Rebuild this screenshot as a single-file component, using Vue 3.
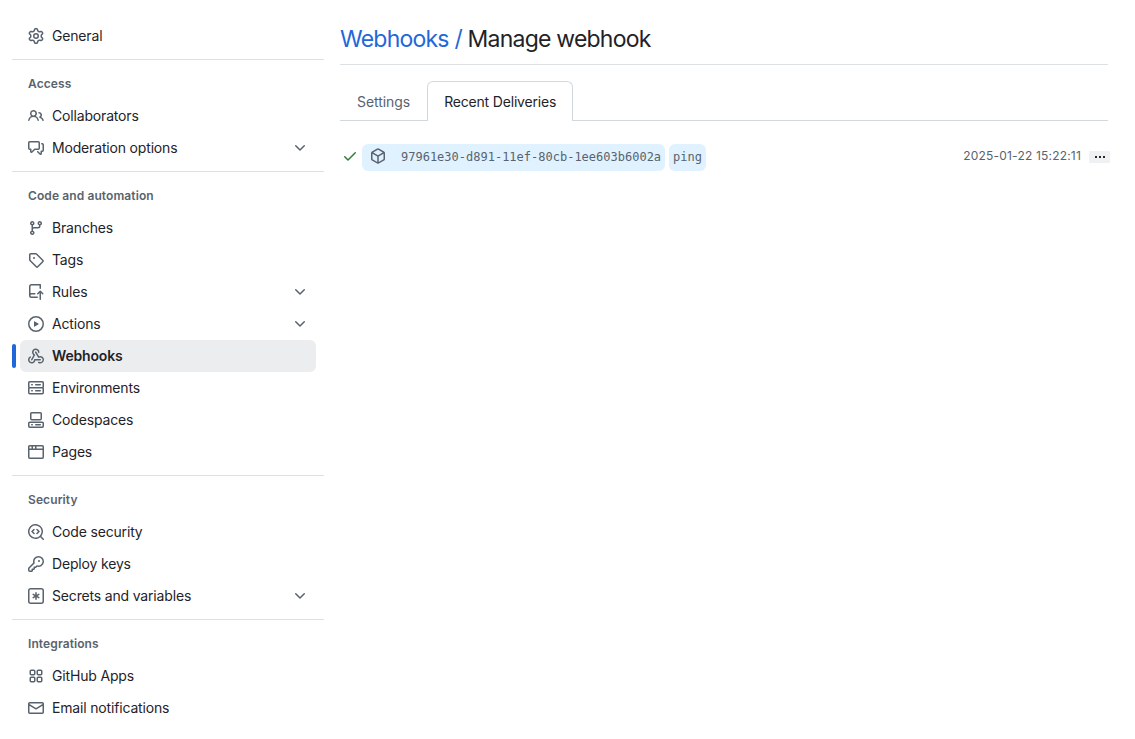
<script setup>
const icons = {
  gear: 'M8 0a8.2 8.2 0 0 1 .701.031C9.444.095 9.99.645 10.16 1.29l.288 1.107c.018.066.079.158.212.224.231.114.454.243.668.386.123.082.233.09.299.071l1.103-.303c.644-.176 1.392.021 1.82.63.27.385.506.792.704 1.218.315.675.111 1.422-.364 1.891l-.814.806c-.049.048-.098.147-.088.294.016.257.016.515 0 .772-.01.147.038.246.088.294l.814.806c.475.469.679 1.216.364 1.891a7.977 7.977 0 0 1-.704 1.217c-.428.61-1.176.807-1.82.63l-1.102-.302c-.067-.019-.177-.011-.3.071a5.909 5.909 0 0 1-.668.386c-.133.066-.194.158-.211.224l-.29 1.106c-.168.646-.715 1.196-1.458 1.26a8.006 8.006 0 0 1-1.402 0c-.743-.064-1.289-.614-1.458-1.26l-.289-1.106c-.018-.066-.079-.158-.212-.224a5.738 5.738 0 0 1-.668-.386c-.123-.082-.233-.09-.299-.071l-1.103.303c-.644.176-1.392-.021-1.82-.63a8.12 8.12 0 0 1-.704-1.218c-.315-.675-.111-1.422.363-1.891l.815-.806c.05-.048.098-.147.088-.294a6.214 6.214 0 0 1 0-.772c.01-.147-.038-.246-.088-.294l-.815-.806C.635 6.045.431 5.298.746 4.623a7.92 7.92 0 0 1 .704-1.217c.428-.61 1.176-.807 1.82-.63l1.102.302c.067.019.177.011.3-.071.214-.143.437-.272.668-.386.133-.066.194-.158.211-.224l.29-1.106C6.009.645 6.556.095 7.299.03 7.53.01 7.764 0 8 0Zm-.571 1.525c-.036.003-.108.036-.137.146l-.289 1.105c-.147.561-.549.967-.998 1.189-.173.086-.34.183-.5.29-.417.278-.97.423-1.529.27l-1.103-.303c-.109-.03-.175.016-.195.045-.22.312-.412.644-.573.99-.014.031-.021.11.059.19l.815.806c.411.406.562.957.53 1.456a4.709 4.709 0 0 0 0 .582c.032.499-.119 1.05-.53 1.456l-.815.806c-.081.08-.073.159-.059.19.162.346.353.677.573.989.02.03.085.076.195.046l1.102-.303c.56-.153 1.113-.008 1.53.27.161.107.328.204.501.29.447.222.85.629.997 1.189l.289 1.105c.029.109.101.143.137.146a6.6 6.6 0 0 0 1.142 0c.036-.003.108-.036.137-.146l.289-1.105c.147-.561.549-.967.998-1.189.173-.086.34-.183.5-.29.417-.278.97-.423 1.529-.27l1.103.303c.109.029.175-.016.195-.045.22-.313.411-.644.573-.99.014-.031.021-.11-.059-.19l-.815-.806c-.411-.406-.562-.957-.53-1.456a4.709 4.709 0 0 0 0-.582c-.032-.499.119-1.05.53-1.456l.815-.806c.081-.08.073-.159.059-.19a6.464 6.464 0 0 0-.573-.989c-.02-.03-.085-.076-.195-.046l-1.102.303c-.56.153-1.113.008-1.53-.27a4.44 4.44 0 0 0-.501-.29c-.447-.222-.85-.629-.997-1.189l-.289-1.105c-.029-.11-.101-.143-.137-.146a6.6 6.6 0 0 0-1.142 0ZM11 8a3 3 0 1 1-6 0 3 3 0 0 1 6 0ZM9.5 8a1.5 1.5 0 1 0-3.001.001A1.5 1.5 0 0 0 9.5 8Z',
  people: 'M2 5.5a3.5 3.5 0 1 1 5.898 2.549 5.508 5.508 0 0 1 3.034 4.084.75.75 0 1 1-1.482.235 4 4 0 0 0-7.9 0 .75.75 0 0 1-1.482-.236A5.507 5.507 0 0 1 3.102 8.05 3.493 3.493 0 0 1 2 5.5ZM11 4a3.001 3.001 0 0 1 2.22 5.018 5.01 5.01 0 0 1 2.56 3.012.749.749 0 0 1-.885.954.752.752 0 0 1-.549-.514 3.507 3.507 0 0 0-2.522-2.372.75.75 0 0 1-.574-.73v-.352a.75.75 0 0 1 .416-.672A1.5 1.5 0 0 0 11 5.5.75.75 0 0 1 11 4Zm-5.5-.5a2 2 0 1 0-.001 3.999A2 2 0 0 0 5.5 3.5Z',
  discussion: 'M1.75 1h8.5c.966 0 1.75.784 1.75 1.75v5.5A1.75 1.75 0 0 1 10.25 10H7.061l-2.574 2.573A1.458 1.458 0 0 1 2 11.543V10h-.25A1.75 1.75 0 0 1 0 8.25v-5.5C0 1.784.784 1 1.75 1ZM1.5 2.75v5.5c0 .138.112.25.25.25h1a.75.75 0 0 1 .75.75v2.19l2.72-2.72a.749.749 0 0 1 .53-.22h3.5a.25.25 0 0 0 .25-.25v-5.5a.25.25 0 0 0-.25-.25h-8.5a.25.25 0 0 0-.25.25Zm13 2a.25.25 0 0 0-.25-.25h-.5a.75.75 0 0 1 0-1.5h.5c.966 0 1.75.784 1.75 1.75v5.5A1.75 1.75 0 0 1 14.25 12H14v1.543a1.458 1.458 0 0 1-2.487 1.03L9.22 12.28a.749.749 0 0 1 .326-1.275.749.749 0 0 1 .734.215l2.22 2.22v-2.19a.75.75 0 0 1 .75-.75h1a.25.25 0 0 0 .25-.25Z',
  branch: 'M9.5 3.25a2.25 2.25 0 1 1 3 2.122V6A2.5 2.5 0 0 1 10 8.5H6a1 1 0 0 0-1 1v1.128a2.251 2.251 0 1 1-1.5 0V5.372a2.25 2.25 0 1 1 1.5 0v1.836A2.493 2.493 0 0 1 6 7h4a1 1 0 0 0 1-1v-.628A2.25 2.25 0 0 1 9.5 3.25Zm-6 0a.75.75 0 1 0 1.5 0 .75.75 0 0 0-1.5 0Zm8.25-.75a.75.75 0 1 0 0 1.5.75.75 0 0 0 0-1.5ZM4.25 12a.75.75 0 1 0 0 1.5.75.75 0 0 0 0-1.5Z',
  tag: 'M1 7.775V2.75C1 1.784 1.784 1 2.75 1h5.025c.464 0 .91.184 1.238.513l6.25 6.25a1.75 1.75 0 0 1 0 2.474l-5.026 5.026a1.75 1.75 0 0 1-2.474 0l-6.25-6.25A1.752 1.752 0 0 1 1 7.775Zm1.5 0c0 .066.026.13.073.177l6.25 6.25a.25.25 0 0 0 .354 0l5.025-5.025a.25.25 0 0 0 0-.354l-6.25-6.25a.25.25 0 0 0-.177-.073H2.75a.25.25 0 0 0-.25.25ZM6 5a1 1 0 1 1 0 2 1 1 0 0 1 0-2Z',
  push: 'M1 2.5A2.5 2.5 0 0 1 3.5 0h8.75a.75.75 0 0 1 .75.75v3.5a.75.75 0 0 1-1.5 0V1.5h-8a1 1 0 0 0-1 1v6.708A2.493 2.493 0 0 1 3.5 9h3.25a.75.75 0 0 1 0 1.5H3.5a1 1 0 0 0 0 2h5.75a.75.75 0 0 1 0 1.5H3.5A2.5 2.5 0 0 1 1 11.5Zm13.23 7.79h-.001l-1.224-1.224v6.184a.75.75 0 0 1-1.5 0V9.066L10.28 10.29a.75.75 0 0 1-1.06-1.061l2.505-2.504a.75.75 0 0 1 1.06 0L15.29 9.23a.751.751 0 0 1-.018 1.042.751.751 0 0 1-1.042.018Z',
  play: 'M8 0a8 8 0 1 1 0 16A8 8 0 0 1 8 0ZM1.5 8a6.5 6.5 0 1 0 13 0 6.5 6.5 0 0 0-13 0Zm4.879-2.773 4.264 2.559a.25.25 0 0 1 0 .428l-4.264 2.559A.25.25 0 0 1 6 10.559V5.442a.25.25 0 0 1 .379-.215Z',
  webhook: 'M5.5 4.25a2.25 2.25 0 0 1 4.5 0 .75.75 0 0 0 1.5 0 3.75 3.75 0 1 0-6.14 2.889l-2.272 4.258a.75.75 0 0 0 1.324.706L7 7.25a.75.75 0 0 0-.309-1.015A2.25 2.25 0 0 1 5.5 4.25Z M7.364 3.607a.75.75 0 0 1 1.03.257l2.608 4.349a3.75 3.75 0 1 1-.628 6.785.75.75 0 0 1 .752-1.299 2.25 2.25 0 1 0-.033-3.88.75.75 0 0 1-1.03-.256L7.107 4.636a.75.75 0 0 1 .257-1.03Z M2.9 8.776A.75.75 0 0 1 2.625 9.8 2.25 2.25 0 1 0 6 11.75a.75.75 0 0 1 .75-.751h5.5a.75.75 0 0 1 0 1.5H7.425a3.751 3.751 0 1 1-5.55-3.998.75.75 0 0 1 1.024.274Z',
  server: 'M1.75 1h12.5c.966 0 1.75.784 1.75 1.75v4c0 .372-.116.717-.314 1 .198.283.314.628.314 1v4a1.75 1.75 0 0 1-1.75 1.75H1.75A1.75 1.75 0 0 1 0 12.75v-4c0-.358.109-.707.314-1a1.739 1.739 0 0 1-.314-1v-4C0 1.784.784 1 1.75 1ZM1.5 2.75v4c0 .138.112.25.25.25h12.5a.25.25 0 0 0 .25-.25v-4a.25.25 0 0 0-.25-.25H1.75a.25.25 0 0 0-.25.25Zm.25 5.75a.25.25 0 0 0-.25.25v4c0 .138.112.25.25.25h12.5a.25.25 0 0 0 .25-.25v-4a.25.25 0 0 0-.25-.25ZM7 4.75A.75.75 0 0 1 7.75 4h4.5a.75.75 0 0 1 0 1.5h-4.5A.75.75 0 0 1 7 4.75ZM7.75 10h4.5a.75.75 0 0 1 0 1.5h-4.5a.75.75 0 0 1 0-1.5ZM3 4.75A.75.75 0 0 1 3.75 4h.5a.75.75 0 0 1 0 1.5h-.5A.75.75 0 0 1 3 4.75ZM3.75 10h.5a.75.75 0 0 1 0 1.5h-.5a.75.75 0 0 1 0-1.5Z',
  codespaces: 'M0 11.25c0-.966.784-1.75 1.75-1.75h12.5c.966 0 1.75.784 1.75 1.75v3A1.75 1.75 0 0 1 14.25 16H1.75A1.75 1.75 0 0 1 0 14.25Zm2-9.5C2 .784 2.784 0 3.75 0h8.5C13.216 0 14 .784 14 1.75v5a1.75 1.75 0 0 1-1.75 1.75h-8.5A1.75 1.75 0 0 1 2 6.75Zm1.75-.25a.25.25 0 0 0-.25.25v5c0 .138.112.25.25.25h8.5a.25.25 0 0 0 .25-.25v-5a.25.25 0 0 0-.25-.25Zm-2 9.5a.25.25 0 0 0-.25.25v3c0 .138.112.25.25.25h12.5a.25.25 0 0 0 .25-.25v-3a.25.25 0 0 0-.25-.25Z M7 12.75a.75.75 0 0 1 .75-.75h4.5a.75.75 0 0 1 0 1.5h-4.5a.75.75 0 0 1-.75-.75Zm-4 0a.75.75 0 0 1 .75-.75h.5a.75.75 0 0 1 0 1.5h-.5a.75.75 0 0 1-.75-.75Z',
  browser: 'M0 2.75C0 1.784.784 1 1.75 1h12.5c.966 0 1.75.784 1.75 1.75v10.5A1.75 1.75 0 0 1 14.25 15H1.75A1.75 1.75 0 0 1 0 13.25ZM14.5 6h-13v7.25c0 .138.112.25.25.25h12.5a.25.25 0 0 0 .25-.25Zm-6-3.5v2h6V2.75a.25.25 0 0 0-.25-.25ZM5 2.5v2h2v-2Zm-3.25 0a.25.25 0 0 0-.25.25V4.5h2v-2Z',
  codescan: 'M8.47 4.97a.75.75 0 0 0 0 1.06L9.94 7.5 8.47 8.97a.75.75 0 1 0 1.06 1.06l2-2a.75.75 0 0 0 0-1.06l-2-2a.75.75 0 0 0-1.06 0ZM6.53 6.03a.75.75 0 0 0-1.06-1.06l-2 2a.75.75 0 0 0 0 1.06l2 2a.75.75 0 1 0 1.06-1.06L5.06 7.5l1.47-1.47Z M12.246 13.307a7.501 7.501 0 1 1 1.06-1.06l2.474 2.473a.749.749 0 1 1-1.06 1.06l-2.474-2.473ZM1.5 7.5a6.002 6.002 0 0 0 3.608 5.504 6.002 6.002 0 0 0 6.486-1.117.748.748 0 0 1 .292-.293A6 6 0 1 0 1.5 7.5Z',
  key: 'M10.5 0a5.499 5.499 0 1 1-1.288 10.848l-.932.932a.749.749 0 0 1-.53.22H7v.75a.749.749 0 0 1-.22.53l-.5.5a.749.749 0 0 1-.53.22H5v.75a.749.749 0 0 1-.22.53l-.5.5a.749.749 0 0 1-.53.22h-2A1.75 1.75 0 0 1 0 14.25v-2c0-.199.079-.389.22-.53l4.932-4.932A5.5 5.5 0 0 1 10.5 0Zm-4 5.5c-.001.431.069.86.205 1.269a.75.75 0 0 1-.181.768L1.5 12.56v1.69c0 .138.112.25.25.25h1.69l.06-.06v-1.19a.75.75 0 0 1 .75-.75h1.19l.06-.06v-1.19a.75.75 0 0 1 .75-.75h1.19l1.023-1.025a.75.75 0 0 1 .768-.18A4 4 0 1 0 6.5 5.5ZM11 6a1 1 0 1 1 0-2 1 1 0 0 1 0 2Z',
  asterisk: 'M0 2.75A2.75 2.75 0 0 1 2.75 0h10.5A2.75 2.75 0 0 1 16 2.75v10.5A2.75 2.75 0 0 1 13.25 16H2.75A2.75 2.75 0 0 1 0 13.25ZM2.75 1.5c-.69 0-1.25.56-1.25 1.25v10.5c0 .69.56 1.25 1.25 1.25h10.5c.69 0 1.25-.56 1.25-1.25V2.75c0-.69-.56-1.25-1.25-1.25Z M8 4a.75.75 0 0 1 .75.75V6.7l1.69-.975a.75.75 0 0 1 .75 1.3L9.5 8l1.69.976a.75.75 0 0 1-.75 1.298L8.75 9.3v1.951a.75.75 0 0 1-1.5 0V9.299l-1.69.976a.75.75 0 0 1-.75-1.3L6.5 8l-1.69-.975a.75.75 0 0 1 .75-1.3l1.69.976V4.75A.75.75 0 0 1 8 4Z',
  apps: 'M1.5 3.25c0-.966.784-1.75 1.75-1.75h2.5c.966 0 1.75.784 1.75 1.75v2.5A1.75 1.75 0 0 1 5.75 7.5h-2.5A1.75 1.75 0 0 1 1.5 5.75Zm7 0c0-.966.784-1.75 1.75-1.75h2.5c.966 0 1.75.784 1.75 1.75v2.5a1.75 1.75 0 0 1-1.75 1.75h-2.5A1.75 1.75 0 0 1 8.5 5.75Zm-7 7c0-.966.784-1.75 1.75-1.75h2.5c.966 0 1.75.784 1.75 1.75v2.5a1.75 1.75 0 0 1-1.75 1.75h-2.5a1.75 1.75 0 0 1-1.75-1.75Zm7 0c0-.966.784-1.75 1.75-1.75h2.5c.966 0 1.75.784 1.75 1.75v2.5a1.75 1.75 0 0 1-1.75 1.75h-2.5a1.75 1.75 0 0 1-1.75-1.75ZM3.25 3a.25.25 0 0 0-.25.25v2.5c0 .138.112.25.25.25h2.5A.25.25 0 0 0 6 5.75v-2.5A.25.25 0 0 0 5.75 3Zm7 0a.25.25 0 0 0-.25.25v2.5c0 .138.112.25.25.25h2.5a.25.25 0 0 0 .25-.25v-2.5a.25.25 0 0 0-.25-.25Zm-7 7a.25.25 0 0 0-.25.25v2.5c0 .138.112.25.25.25h2.5a.25.25 0 0 0 .25-.25v-2.5a.25.25 0 0 0-.25-.25Zm7 0a.25.25 0 0 0-.25.25v2.5c0 .138.112.25.25.25h2.5a.25.25 0 0 0 .25-.25v-2.5a.25.25 0 0 0-.25-.25Z',
  mail: 'M1.75 2h12.5c.966 0 1.75.784 1.75 1.75v8.5A1.75 1.75 0 0 1 14.25 14H1.75A1.75 1.75 0 0 1 0 12.25v-8.5C0 2.784.784 2 1.75 2ZM1.5 12.251c0 .138.112.25.25.25h12.5a.25.25 0 0 0 .25-.25V5.809L8.38 9.397a.75.75 0 0 1-.76 0L1.5 5.809v6.442Zm13-8.181v-.32a.25.25 0 0 0-.25-.25H1.75a.25.25 0 0 0-.25.25v.32L8 7.88Z',
  cube: 'm8.878.392 5.25 3.045c.54.314.872.89.872 1.514v6.098a1.75 1.75 0 0 1-.872 1.514l-5.25 3.045a1.75 1.75 0 0 1-1.756 0l-5.25-3.045A1.75 1.75 0 0 1 1 11.049V4.951c0-.624.332-1.201.872-1.514L7.122.392a1.75 1.75 0 0 1 1.756 0ZM7.875 1.69l-4.63 2.685L8 7.133l4.755-2.758-4.63-2.685a.248.248 0 0 0-.25 0ZM2.5 5.677v5.372c0 .09.047.171.125.216l4.625 2.683V8.432Zm6.25 8.271 4.625-2.683a.25.25 0 0 0 .125-.216V5.677L8.75 8.432Z',
  check: 'M13.78 4.22a.75.75 0 0 1 0 1.06l-7.25 7.25a.75.75 0 0 1-1.06 0L2.22 9.28a.751.751 0 0 1 .018-1.042.751.751 0 0 1 1.042-.018L6 10.94l6.72-6.72a.75.75 0 0 1 1.06 0Z',
  chevron: 'M12.78 5.22a.749.749 0 0 1 0 1.06l-4.25 4.25a.749.749 0 0 1-1.06 0L3.22 6.28a.749.749 0 1 1 1.06-1.06L8 8.939l3.72-3.719a.749.749 0 0 1 1.06 0Z',
}

const groups = [
  { items: [{ label: 'General', icon: 'gear' }] },
  {
    title: 'Access',
    items: [
      { label: 'Collaborators', icon: 'people' },
      { label: 'Moderation options', icon: 'discussion', expandable: true },
    ],
  },
  {
    title: 'Code and automation',
    items: [
      { label: 'Branches', icon: 'branch' },
      { label: 'Tags', icon: 'tag' },
      { label: 'Rules', icon: 'push', expandable: true },
      { label: 'Actions', icon: 'play', expandable: true },
      { label: 'Webhooks', icon: 'webhook', active: true },
      { label: 'Environments', icon: 'server' },
      { label: 'Codespaces', icon: 'codespaces' },
      { label: 'Pages', icon: 'browser' },
    ],
  },
  {
    title: 'Security',
    items: [
      { label: 'Code security', icon: 'codescan' },
      { label: 'Deploy keys', icon: 'key' },
      { label: 'Secrets and variables', icon: 'asterisk', expandable: true },
    ],
  },
  {
    title: 'Integrations',
    items: [
      { label: 'GitHub Apps', icon: 'apps' },
      { label: 'Email notifications', icon: 'mail' },
    ],
  },
]
</script>

<template>
  <div class="page">
    <nav class="sidebar">
      <section v-for="(group, i) in groups" :key="i" class="group">
        <h3 v-if="group.title" class="group-title">{{ group.title }}</h3>
        <a v-for="item in group.items" :key="item.label" class="item" :class="{ active: item.active }">
          <svg class="icon" viewBox="0 0 16 16"><path :d="icons[item.icon]" /></svg>
          <span class="label">{{ item.label }}</span>
          <svg v-if="item.expandable" class="icon" viewBox="0 0 16 16"><path :d="icons.chevron" /></svg>
        </a>
      </section>
    </nav>

    <main class="content">
      <h2 class="heading"><a class="crumb">Webhooks /</a> Manage webhook</h2>

      <div class="tabs">
        <a class="tab">Settings</a>
        <a class="tab selected">Recent Deliveries</a>
      </div>

      <div class="delivery">
        <svg class="check" viewBox="0 0 16 16"><path :d="icons.check" /></svg>
        <code class="chip guid">
          <svg class="icon" viewBox="0 0 16 16"><path :d="icons.cube" /></svg>
          <span>97961e30-d891-11ef-80cb-1ee603b6002a</span>
        </code>
        <code class="chip">ping</code>
        <time class="time">2025-01-22 15:22:11</time>
        <button class="more" aria-label="Details"><i /><i /><i /></button>
      </div>
    </main>
  </div>
</template>

<style>
body {
  margin: 0;
  background: #fff;
}
</style>

<style scoped>
.page {
  display: flex;
  height: 739px;
  overflow: hidden;
  font-family: Inter, "Liberation Sans", sans-serif;
  font-size: 14px;
  line-height: 20px;
  color: #1f2328;
}
.sidebar {
  flex: none;
  width: 312px;
  margin-left: 12px;
  padding-top: 20px;
}
.group + .group {
  margin-top: 7px;
  padding-top: 8px;
  border-top: 1px solid #dee1e4;
}
.group-title {
  margin: 0;
  padding: 6px 16px;
  font-size: 12px;
  font-weight: 600;
  letter-spacing: 0.1px;
  color: #59636e;
}
.item {
  position: relative;
  display: flex;
  align-items: center;
  gap: 8px;
  height: 32px;
  margin: 0 8px;
  padding: 0 8px;
  box-sizing: border-box;
  border-radius: 6px;
}
.item.active {
  background: #ecedef;
  font-weight: 600;
}
.item.active::before {
  content: "";
  position: absolute;
  left: -8px;
  top: 4px;
  width: 4px;
  height: 24px;
  border-radius: 6px;
  background: #1f68d9;
}
.label {
  flex: 1;
  letter-spacing: -0.17px;
}
.icon {
  flex: none;
  width: 16px;
  height: 16px;
  fill: #59636e;
}
.content {
  flex: none;
  width: 768px;
  margin-left: 16px;
  padding-top: 21px;
}
.heading {
  margin: 0;
  padding-bottom: 7px;
  border-bottom: 1px solid #dee1e4;
  font-size: 23px;
  font-weight: 400;
  line-height: 36px;
  letter-spacing: -0.78px;
}
.crumb {
  color: #1f68d9;
}
.tabs {
  display: flex;
  height: 39px;
  margin-top: 16px;
  border-bottom: 1px solid #d1d9e0;
}
.tab {
  height: 40px;
  padding: 10px 16px;
  box-sizing: border-box;
  border: 1px solid transparent;
  border-bottom: 0;
  letter-spacing: -0.06px;
  color: #59636e;
}
.tab.selected {
  background: #fff;
  border-color: #d1d9e0;
  border-radius: 6px 6px 0 0;
  letter-spacing: -0.18px;
  color: #1f2328;
}
.delivery {
  display: flex;
  align-items: center;
  height: 27px;
  margin: 23px -2px 0 2px;
}
.check {
  width: 16px;
  height: 16px;
  margin: 0 4px 3px 0;
  fill: #347d39;
}
.chip {
  display: flex;
  align-items: center;
  height: 27px;
  padding: 0 4px 2px;
  margin-right: 4px;
  box-sizing: border-box;
  border-radius: 6px;
  background: #e0f2ff;
  font-family: "DejaVu Sans Mono", monospace;
  font-size: 12px;
  color: #59636e;
}
.guid {
  gap: 15px;
  padding-left: 8px;
}
.guid .icon {
  margin-bottom: 1px;
}
.time {
  margin: 0 0 3px auto;
  font-size: 12px;
  letter-spacing: 0.19px;
  color: #59636e;
}
.more {
  display: flex;
  align-items: center;
  justify-content: center;
  gap: 2px;
  width: 21px;
  height: 12px;
  margin: 0 0 1px 8px;
  padding: 0;
  border: 0;
  border-radius: 1px;
  background: #eff1f3;
}
.more i {
  width: 2px;
  height: 2px;
  background: #25292e;
}
</style>
